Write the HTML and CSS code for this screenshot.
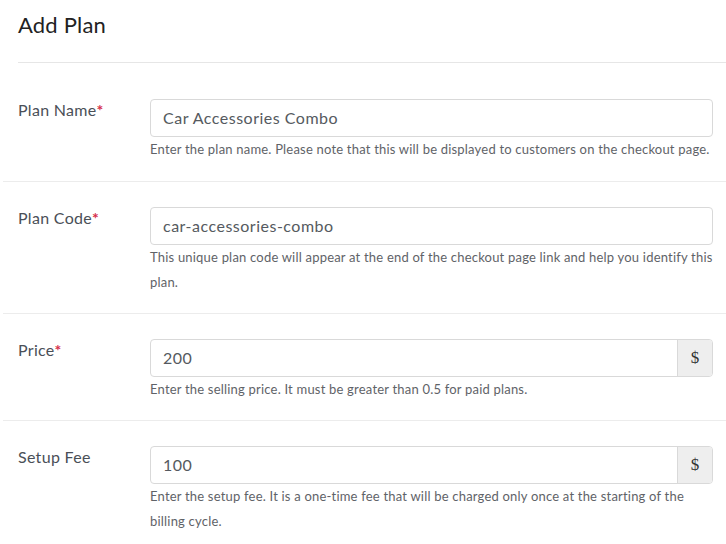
FILE: index.html
```html
<!DOCTYPE html>
<html>
<head>
<meta charset="utf-8">
<link rel="stylesheet" href="styles.css">
</head>
<body>
<div class="header"><h1 class="title">Add Plan</h1></div>
<form class="form">
  <div class="row">
    <label class="label">Plan Name<span class="req">*</span></label>
    <div class="field">
      <div class="control"><span class="input">Car Accessories Combo</span></div>
      <p class="help">Enter the plan name. Please note that this will be displayed to customers on the checkout page.</p>
    </div>
  </div>
  <div class="row">
    <label class="label">Plan Code<span class="req">*</span></label>
    <div class="field">
      <div class="control"><span class="input">car-accessories-combo</span></div>
      <p class="help">This unique plan code will appear at the end of the checkout page link and help you identify this plan.</p>
    </div>
  </div>
  <div class="row">
    <label class="label">Price<span class="req">*</span></label>
    <div class="field">
      <div class="control group"><span class="input">200</span><span class="addon">$</span></div>
      <p class="help">Enter the selling price. It must be greater than 0.5 for paid plans.</p>
    </div>
  </div>
  <div class="row">
    <label class="label">Setup Fee</label>
    <div class="field">
      <div class="control group"><span class="input">100</span><span class="addon">$</span></div>
      <p class="help">Enter the setup fee. It is a one-time fee that will be charged only once at the starting of the billing cycle.</p>
    </div>
  </div>
</form>
</body>
</html>
```
FILE: styles.css
```css
html, body {
  margin: 0;
  padding: 0;
  background: #fff;
  font-family: Lato, "Open Sans", sans-serif;
  color: #333;
}
.header {
  margin-left: 18px;
  height: 63px;
  border-bottom: 1px solid #e6e6e6;
  box-sizing: border-box;
}
.title {
  margin: 0;
  padding-top: 11px;
  font-size: 22px;
  font-weight: 400;
  line-height: 28px;
  letter-spacing: 0.2px;
  color: #222;
}
.form {
  margin: 0 0 0 3px;
  padding-top: 11px;
}
.row {
  display: grid;
  grid-template-columns: 132px 1fr;
  padding: 25px 13px 18px 15px;
  border-bottom: 1px solid #ececec;
}
.row:first-child {
  padding-bottom: 19px;
}
.label {
  font-size: 16px;
  line-height: 22px;
  letter-spacing: 0.3px;
  color: #4a4f57;
}
.req {
  color: #d6304a;
  font-weight: 700;
}
.control {
  display: flex;
  height: 38px;
  box-sizing: border-box;
  border: 1px solid #d9d9d9;
  border-radius: 4px;
}
.input {
  flex: 1;
  display: flex;
  align-items: center;
  padding: 0 12px 1px;
  font-size: 16px;
  letter-spacing: 0.5px;
  color: #555a60;
}
.addon {
  width: 34px;
  display: flex;
  align-items: center;
  justify-content: center;
  background: #eeeeee;
  border-left: 1px solid #d9d9d9;
  border-radius: 0 3px 3px 0;
  font-family: "Liberation Serif", serif;
  font-size: 17px;
  color: #333;
}
.help {
  margin: 0;
  font-size: 13px;
  line-height: 25px;
  letter-spacing: 0.2px;
  color: #5f6368;
}
```
